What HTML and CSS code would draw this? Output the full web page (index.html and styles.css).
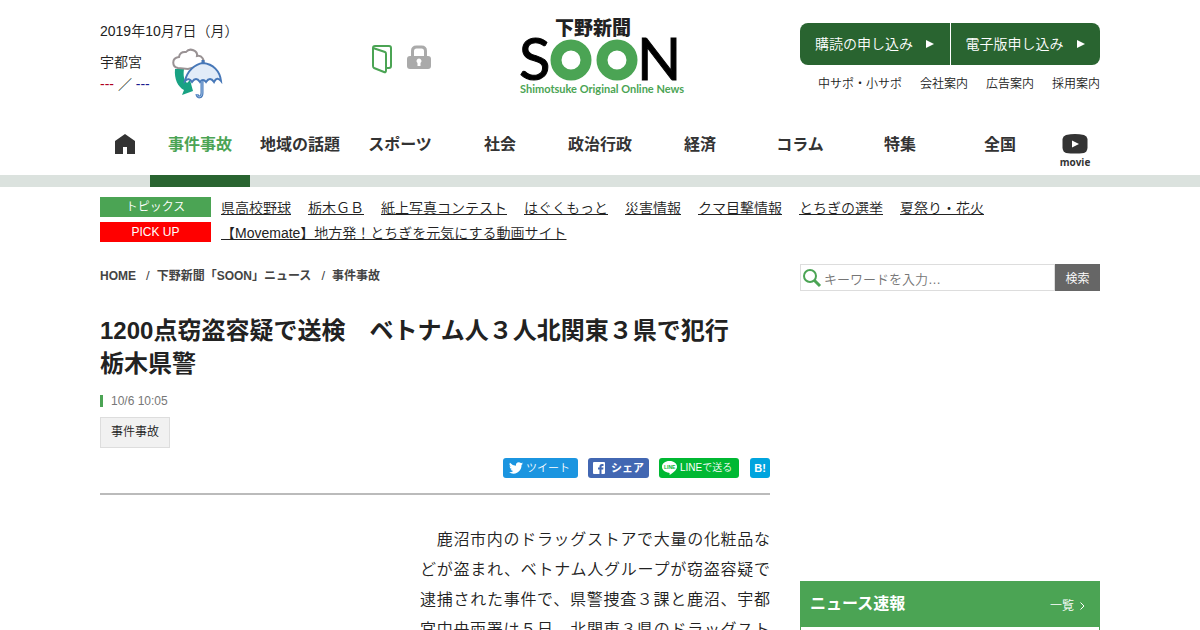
FILE: index.html
```html
<!DOCTYPE html>
<html lang="ja">
<head>
<meta charset="utf-8">
<title>下野新聞 SOON</title>
<link rel="stylesheet" href="styles.css">
</head>
<body>
<header class="header wrap">
  <div class="info">
    <p class="date">2019年10月7日（月）</p>
    <div class="weather">
      <p class="place">宇都宮<br><span class="high">---</span> ／ <span class="low">---</span></p>
      <svg class="weather-icon" width="52" height="52" viewBox="0 0 52 52" aria-hidden="true">
        <path d="M4 21C3 31 7 39 13 42l-2 5 11-4-3-11-3 3c-3-3-4-7-3-14z" fill="#18a283"/>
        <path d="M7 20C1 19 0 10 8 9 9 3 14 4 15 4c4-5 12-1 11 4 5-1 8 4 6 9L17 21z" fill="#fff" stroke="#999294" stroke-width="2"/>
        <path d="M14 33C16 23 24 16 32 15c10 1 17 8 18 18q-4-5-7 1-4-6-8 0-3-4-6 0-4-6-8 0-3-5-7-1z" fill="#e2ecf8" stroke="#4778b8" stroke-width="2"/>
        <path d="M32 12v4M31 33v12c0 5-5 5-5 1" fill="none" stroke="#4778b8" stroke-width="3"/>
        <path d="M31 33v12c0 5-5 5-5 1" fill="none" stroke="#9fbfe5" stroke-width="1"/>
      </svg>
    </div>
  </div>
  <div class="status">
    <svg width="22" height="30" viewBox="0 0 22 30" aria-hidden="true"><path d="M2 4l12 4q1 .4 1 2v16q0 3-2 2L3 24q-1-.4-1-2V4Q2 2 4 2h14q2 0 2 2v18q0 2-2 2h-3" fill="none" stroke="#4ba454" stroke-width="2"/></svg>
    <svg width="24" height="26" viewBox="0 0 24 26" aria-hidden="true"><path d="M5.500 14V7q0-4 4-4h5q4 0 4 4v7" fill="none" stroke="#aaa" stroke-width="3"/><rect y="12" width="24" height="13" rx="3" fill="#aaa"/><path d="M12 14.500a2.500 2.500 0 0 1 1.500 4.500v3h-3v-3a2.500 2.500 0 0 1 1.500-4.500z" fill="#fff"/></svg>
  </div>
  <a class="logo" href="#" aria-label="下野新聞 SOON">
    <svg width="164" height="76" viewBox="0 0 164 76">
      <text x="35" y="15" class="logo-ja">下野新聞</text>
      <text x="-1" y="60" class="logo-en">S</text>
      <circle cx="51" cy="40" r="15" fill="none" stroke="#4ba454" stroke-width="11"/>
      <circle cx="97" cy="40" r="15" fill="none" stroke="#4ba454" stroke-width="11"/>
      <text x="117" y="60" class="logo-en">N</text>
      <text x="0" y="73" class="logo-sub">Shimotsuke Original Online News</text>
    </svg>
  </a>
  <div class="actions">
    <div class="apply">
      <a href="#">購読の申し込み<svg width="8" height="8" viewBox="0 0 8 8"><path d="M0 0l8 4-8 4z" fill="#fff"/></svg></a>
      <a href="#">電子版申し込み<svg width="8" height="8" viewBox="0 0 8 8"><path d="M0 0l8 4-8 4z" fill="#fff"/></svg></a>
    </div>
    <div class="guides"><a href="#">中サポ・小サポ</a><a href="#">会社案内</a><a href="#">広告案内</a><a href="#">採用案内</a></div>
  </div>
</header>
<nav class="nav">
  <div class="nav-inner">
    <a class="home" href="#" aria-label="ホーム"><svg width="20" height="20" viewBox="0 0 20 20"><path d="M10 0l10 7v13h-8v-7H8v7H0V7z" fill="#333"/></svg></a>
    <a class="current" href="#">事件事故</a><a href="#">地域の話題</a><a href="#">スポーツ</a><a href="#">社会</a><a href="#">政治行政</a><a href="#">経済</a><a href="#">コラム</a><a href="#">特集</a><a href="#">全国</a>
    <a class="movie" href="#"><svg width="26" height="20" viewBox="0 0 26 20"><path d="M4 1q9-2 18 0 3 1 3.500 4v9q-.5 4-3.500 5-9 1-18 0-3-1-3.500-5V5Q1 2 4 1z" fill="#333"/><path d="M10 6.500l7 3.500-7 3.500z" fill="#fff"/></svg><span>movie</span></a>
  </div>
</nav>
<div class="topics wrap">
  <div class="topic-row"><span class="label">トピックス</span><div class="links"><a href="#">県高校野球</a><a href="#">栃木ＧＢ</a><a href="#">紙上写真コンテスト</a><a href="#">はぐくもっと</a><a href="#">災害情報</a><a href="#">クマ目撃情報</a><a href="#">とちぎの選挙</a><a href="#">夏祭り・花火</a></div></div>
  <div class="topic-row"><span class="label pickup">PICK UP</span><div class="links"><a href="#">【Movemate】地方発！とちぎを元気にする動画サイト</a></div></div>
</div>
<div class="columns wrap">
  <main>
    <nav class="crumbs"><a href="#">HOME</a><span>/</span><a href="#">下野新聞「SOON」ニュース</a><span>/</span><a href="#">事件事故</a></nav>
    <h1>1200点窃盗容疑で送検　ベトナム人３人北関東３県で犯行　栃木県警</h1>
    <time class="time" datetime="2019-10-06T10:05">10/6 10:05</time>
    <a class="tag" href="#">事件事故</a>
    <div class="share">
      <a class="tweet" href="#"><svg width="14" height="12" viewBox="0 0 24 20"><path d="M24 2.400a10 10 0 0 1-2.800.8A5 5 0 0 0 23.300.4a10 10 0 0 1-3.100 1.200A5 5 0 0 0 11.800 6 14 14 0 0 1 1.700.9a5 5 0 0 0 1.500 6.600A5 5 0 0 1 1 6.900a5 5 0 0 0 3.900 4.900 5 5 0 0 1-2.200.1 5 5 0 0 0 4.600 3.400A10 10 0 0 1 0 17.400 14 14 0 0 0 21.500 5a10 10 0 0 0 2.500-2.600z" fill="#fff"/></svg>ツイート</a>
      <a class="fb" href="#"><svg width="12" height="12" viewBox="0 0 12 12"><rect width="12" height="12" rx="1" fill="#fff"/><path d="M6.500 12V7.500H5v-2h1.500V4.500Q6.500 2 9 2h1.500v2H9.300Q8.500 4 8.500 4.700v.8h2l-.3 2H8.500V12z" fill="#4267b2"/></svg>シェア</a>
      <a class="line" href="#"><svg width="15" height="14" viewBox="0 0 15 14"><path d="M7.500 0C12 0 15 2.500 15 5.800 15 9 11 12 7.500 14c.4-1.400.2-2-.5-2.200C3 11.400 0 9 0 5.800 0 2.500 3 0 7.500 0z" fill="#fff"/><text x="2" y="8" class="line-mark">LINE</text></svg>LINEで送る</a>
      <a class="hatena" href="#">B!</a>
    </div>
    <article class="article"><p>　鹿沼市内のドラッグストアで大量の化粧品などが盗まれ、ベトナム人グループが窃盗容疑で逮捕された事件で、県警捜査３課と鹿沼、宇都宮中央両署は５日、北関東３県のドラッグストア</p></article>
  </main>
  <aside>
    <form class="search">
      <label class="field"><svg width="20" height="20" viewBox="0 0 20 20" aria-hidden="true"><circle cx="8" cy="8" r="6" fill="none" stroke="#4ba454" stroke-width="2"/><path d="M12 12l6 6" stroke="#4ba454" stroke-width="3"/></svg><input type="text" placeholder="キーワードを入力…" aria-label="キーワード"></label>
      <button type="button">検索</button>
    </form>
    <section class="news">
      <div class="news-head"><h2>ニュース速報</h2><a href="#">一覧<svg width="5" height="8" viewBox="0 0 5 8"><path d="M.5.5L4 4 .5 7.500" fill="none" stroke="#fff"/></svg></a></div>
      <div class="news-body"></div>
    </section>
  </aside>
</div>
</body>
</html>
```

FILE: styles.css
```css
* { box-sizing: border-box; }
body { margin: 0; background: #fff; color: #222; font: 350 14px/22px "Liberation Sans", "Noto Sans CJK JP", sans-serif; }
p, h1, h2 { margin: 0; }
a { color: inherit; text-decoration: none; }
svg { display: block; flex: none; overflow: visible; }
.wrap { width: 100%; max-width: 1000px; margin: 0 auto; }

.header { display: grid; grid-template-columns: 270px 150px 1fr 300px; height: 115px; padding-top: 20px; }
.weather { display: flex; gap: 21px; padding-top: 6px; }
.place { padding-top: 3px; }
.high { color: #b00020; }
.low { color: #1b1b8f; }
.status { display: flex; align-items: flex-start; gap: 14px; padding: 24px 0 0 1px; }
.logo { justify-self: start; }
.logo-ja { font: 900 19px "Noto Sans CJK JP", sans-serif; fill: #222; }
.logo-en { font: 58px Lato, sans-serif; fill: #000; stroke: #000; stroke-width: 1px; }
.logo-sub { font: bold 11px Lato, sans-serif; fill: #4ba454; }
.actions { padding-top: 3px; }
.apply { display: flex; gap: 1px; border-radius: 8px; overflow: hidden; }
.apply a { flex: 1; display: flex; align-items: center; gap: 13px; height: 42px; padding-left: 15px; background: #296430; color: #fff; }
.guides { display: flex; justify-content: flex-end; gap: 18px; padding-top: 8px; font-size: 12px; }

.nav { background: linear-gradient(#dbe2de, #dbe2de) bottom / 100% 12px no-repeat; }
.nav-inner { display: grid; grid-template-columns: 50px repeat(9, 1fr) 50px; max-width: 1000px; margin: 0 auto; }
.nav-inner a { display: flex; justify-content: center; height: 72px; padding-top: 19px; color: #333; font-size: 16px; font-weight: bold; }
.nav-inner .current { color: #4ba454; border-bottom: 12px solid #296430; }
.nav-inner .movie { flex-direction: column; justify-content: flex-start; align-items: center; font: bold 10px/16px "Open Sans", sans-serif; }

.topics { padding-top: 10px; }
.topic-row { display: flex; gap: 10px; height: 25px; }
.label { flex: none; width: 111px; height: 20px; background: #4ba454; color: #fff; font-size: 12px; line-height: 20px; text-align: center; }
.pickup { background: #f00; }
.links { display: flex; gap: 17px; }
.links a { text-decoration: underline; }

.columns { display: grid; grid-template-columns: 1fr 300px; gap: 30px; padding-top: 17px; }
main { display: flex; flex-direction: column; align-items: flex-start; }
.crumbs { display: flex; font-size: 12px; font-weight: bold; color: #444; line-height: 24px; }
.crumbs span { padding: 0 7px 0 10px; font-size: 13px; font-weight: normal; }
h1 { padding-top: 26px; font-size: 24px; line-height: 33px; }
.time { margin-top: 15px; padding-left: 8px; border-left: 3px solid #4ba454; color: #777; font-size: 12px; line-height: 12px; }
.tag { margin-top: 10px; padding: 0 10px; border: 1px solid #ddd; background: #f1f1f1; font-size: 12px; line-height: 29px; }
.share { display: flex; justify-content: flex-end; gap: 10px; width: 100%; padding: 10px 0 15px; border-bottom: 2px solid #bbb; }
.share a { display: flex; align-items: center; height: 20px; border-radius: 3px; color: #fff; font-size: 11px; line-height: 20px; }
.share .tweet { width: 75px; padding-left: 6px; gap: 3px; background: #1b95e0; }
.share .fb { width: 61px; padding-left: 5px; gap: 6px; background: #4267b2; font-weight: bold; }
.share .line { width: 80px; padding-left: 3px; gap: 3px; background: #00b833; font-size: 10px; }
.line-mark { font: bold 5px "Liberation Sans", sans-serif; fill: #00b833; }
.share .hatena { width: 20px; margin-left: 1px; justify-content: center; background: #00a4de; font-weight: bold; }
.article { align-self: flex-end; width: 350px; padding-top: 30px; font-size: 16px; line-height: 30px; text-align: justify; }

aside { display: flex; flex-direction: column; gap: 290px; }
.search { display: flex; height: 27px; }
.field { flex: 1; display: flex; align-items: center; gap: 2px; padding-left: 1px; border: 1px solid #ddd; }
.search input { width: 100%; min-width: 0; padding: 3px 0 0; border: 0; outline: 0; background: none; font: 350 13px "Liberation Sans", "Noto Sans CJK JP", sans-serif; }
.search input::placeholder { color: #757575; }
.search button { width: 45px; padding: 0; border: 0; background: #666; color: #fff; font: 350 12px "Liberation Sans", "Noto Sans CJK JP", sans-serif; }
.news-head { display: flex; justify-content: space-between; height: 46px; padding: 0 15px 0 10px; background: #4ba454; color: #fff; line-height: 46px; }
h2 { font-size: 16px; line-height: 46px; }
.news-head a { display: flex; align-items: center; gap: 6px; font-size: 12px; padding-top: 3px; }
.news-body { height: 20px; border: 1px solid #4ba454; border-top: 0; }
```
